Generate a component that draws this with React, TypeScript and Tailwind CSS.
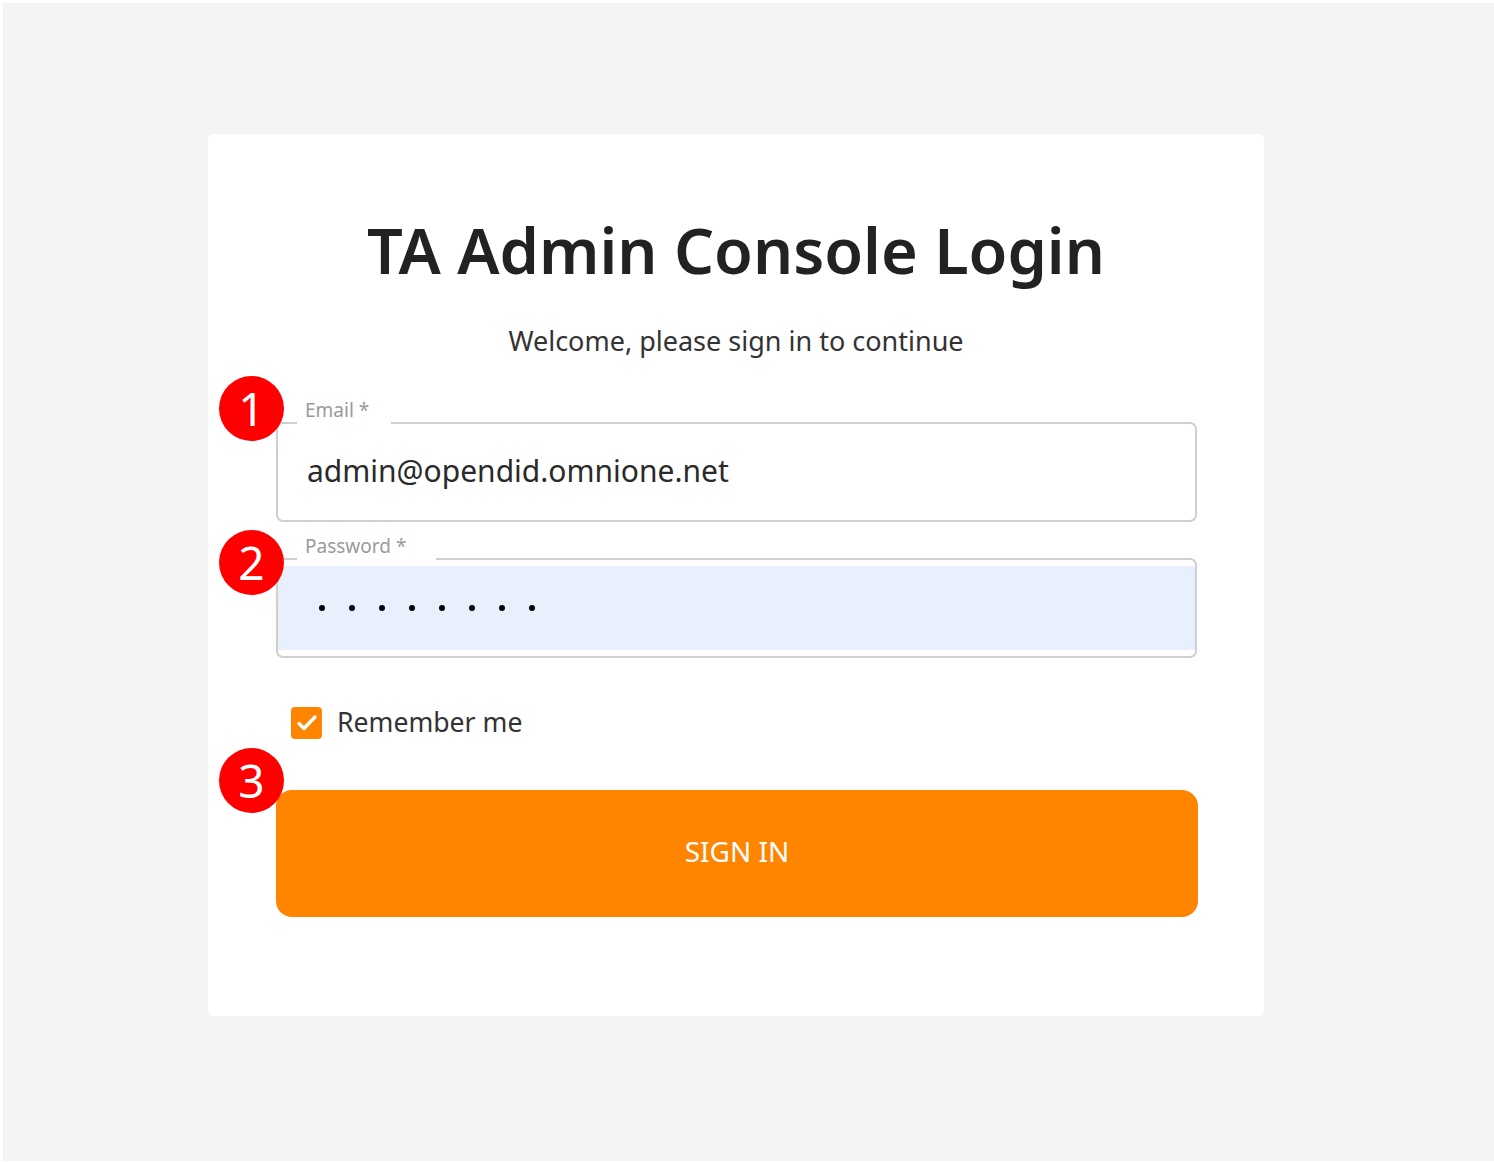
import React from "react";

function Badge({ n, top }: { n: string; top: number }) {
  return (
    <div
      className="absolute left-[219px] w-[65px] h-[65px] rounded-full bg-[#ff0000] flex items-center justify-center text-white text-[46px] leading-none"
      style={{ top }}
    >
      <span className="-mt-[2px]">{n}</span>
    </div>
  );
}

export default function App() {
  const font = { fontFamily: '"Noto Sans", "Open Sans", sans-serif' };
  return (
    <div className="w-[1494px] h-[1164px] bg-white pt-[3px] pl-[3px] pb-[3px] relative" style={font}>
      <div className="h-[1158px] w-[1491px] bg-[#f4f4f6] pt-[131px] pl-[205px]">
        <div className="w-[1056px] h-[882px] bg-white rounded-[6px] flex flex-col pt-[72px] px-[68px]">
          <h1 className="text-center text-[63px] leading-[88px] font-semibold text-[#222]">
            TA Admin Console Login
          </h1>
          <p className="text-center text-[27px] leading-[40px] text-[#333] mt-[27px]">
            Welcome, please sign in to continue
          </p>

          {/* Email */}
          <div className="relative mt-[61px] w-[921px] h-[100px] border-2 border-[#cfcfcf] rounded-[7px] flex items-center pl-[29px]">
            <div className="absolute -top-[2px] left-[19px] w-[94px] h-[2px] bg-white" />
            <span className="absolute -top-[27px] left-[27px] text-[19px] leading-[26px] text-[#9a9a9a]">Email *</span>
            <span className="text-[30px] text-[#2a2a2a] -mt-[4px]">admin@opendid.omnione.net</span>
          </div>

          {/* Password */}
          <div className="relative mt-[36px] w-[921px] h-[100px] border-2 border-[#cfcfcf] rounded-[7px] py-[6px]">
            <div className="absolute -top-[2px] left-[19px] w-[139px] h-[2px] bg-white" />
            <span className="absolute -top-[27px] left-[27px] text-[19px] leading-[26px] text-[#9a9a9a]">Password *</span>
            <div className="h-full bg-[#e8f0fe] flex items-center pl-[41px] gap-[24px]">
              {Array.from({ length: 8 }).map((_, i) => (
                <div key={i} className="w-[6px] h-[6px] rounded-full bg-black" />
              ))}
            </div>
          </div>

          {/* Remember me */}
          <div className="mt-[49px] flex items-center pl-[15px] gap-[15px] h-[32px]">
            <div className="w-[31px] h-[32px] rounded-[4px] bg-[#ff8500] flex items-center justify-center">
              <svg width="24" height="24" viewBox="0 0 24 24" fill="none" stroke="white" strokeWidth="3.4" strokeLinecap="round" strokeLinejoin="round">
                <path d="M4 12.5l5 5L20 6" />
              </svg>
            </div>
            <span className="text-[26.6px] text-[#333] leading-none -mt-[2px]">Remember me</span>
          </div>

          {/* Button */}
          <button className="mt-[51px] w-[922px] h-[127px] rounded-[16px] bg-[#ff8500] text-white text-[28px] flex items-center justify-center pb-[6px]">
            SIGN IN
          </button>
        </div>
      </div>

      <Badge n="1" top={376} />
      <Badge n="2" top={530} />
      <Badge n="3" top={748} />
    </div>
  );
}
